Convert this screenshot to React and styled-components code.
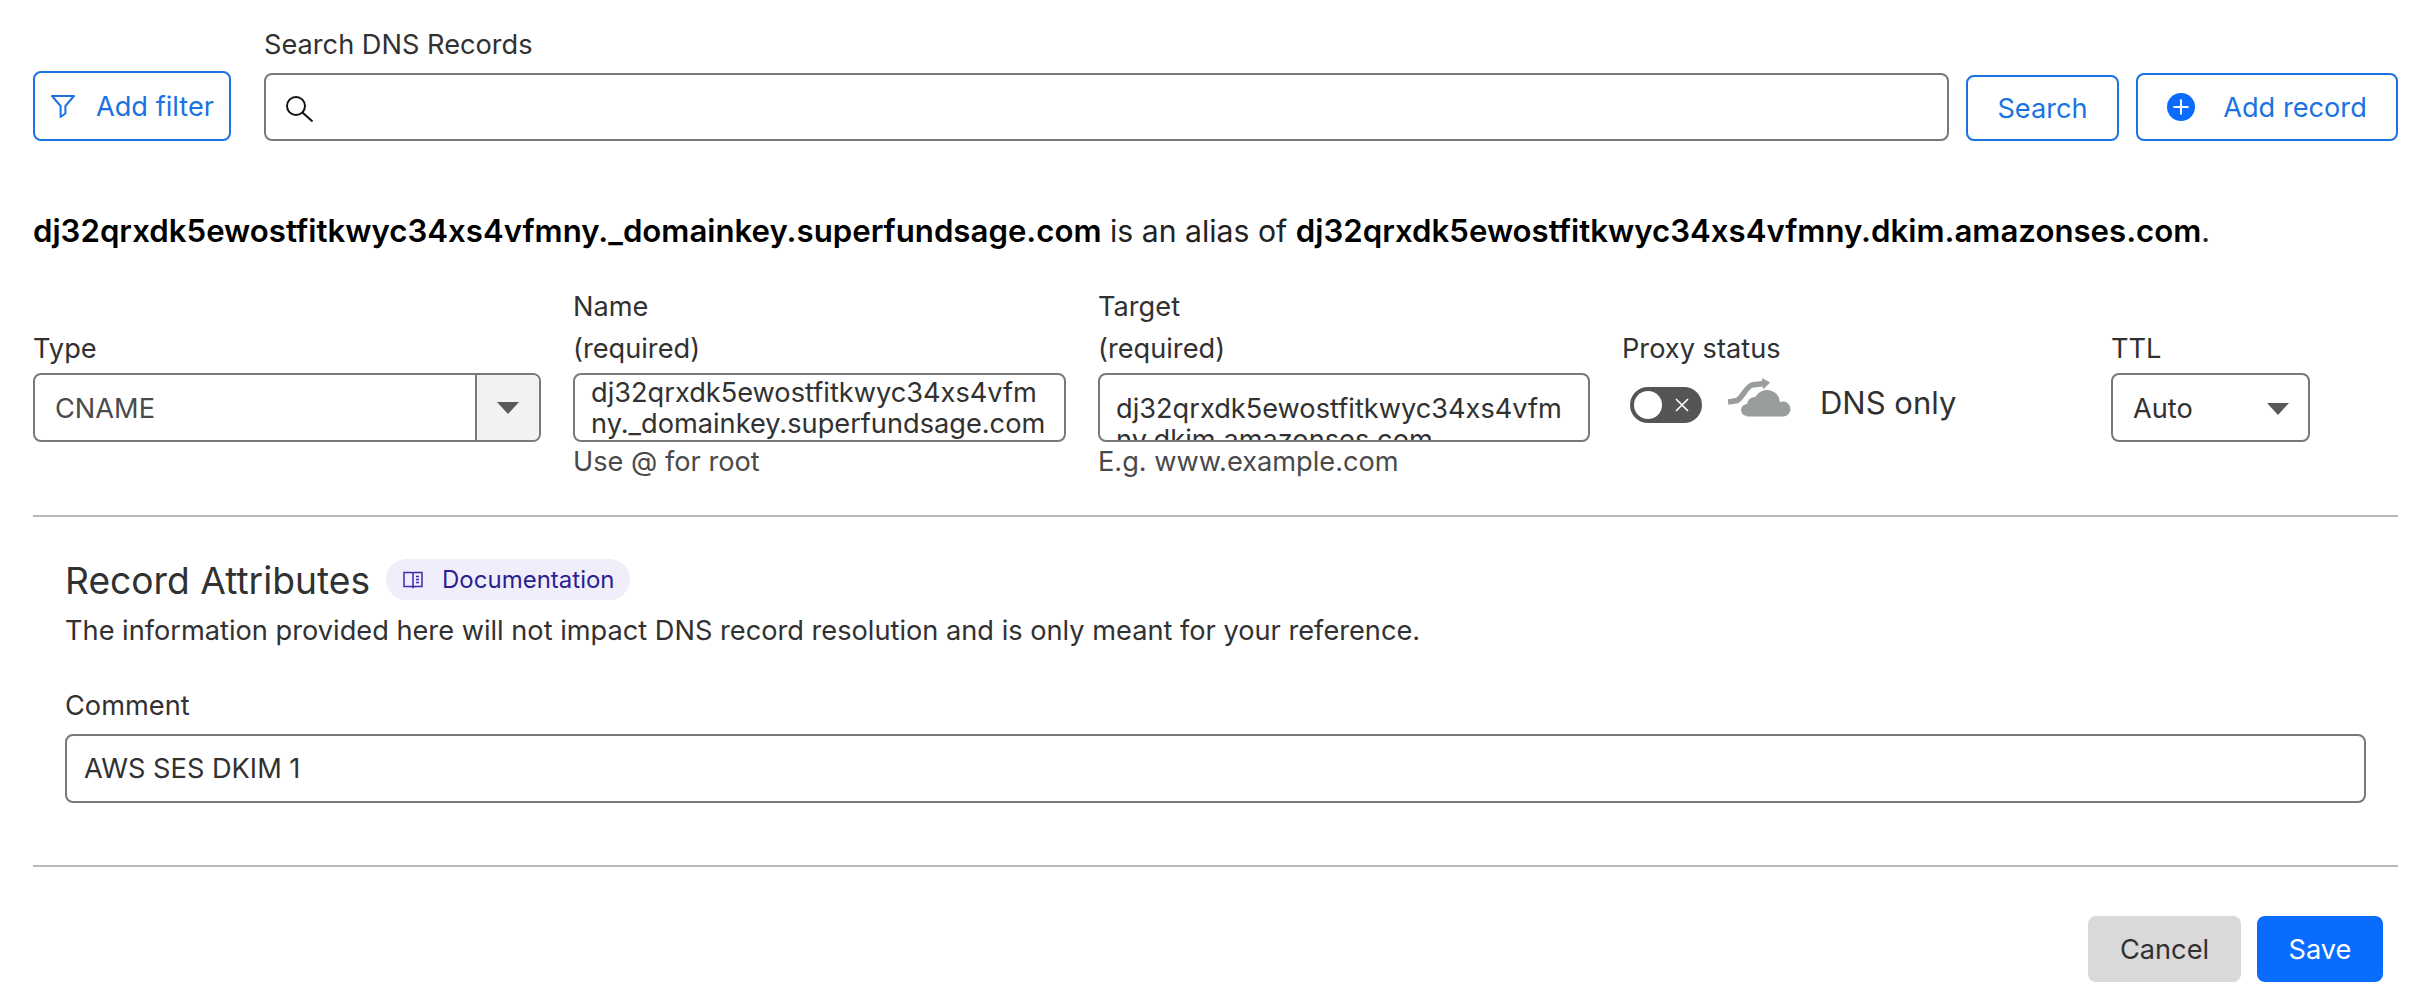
import React from "react";
import styled, { createGlobalStyle } from "styled-components";

const GlobalStyle = createGlobalStyle`
  html, body {
    margin: 0;
    background: #fff;
  }
  * {
    box-sizing: border-box;
  }
  body {
    font-family: Inter, "Noto Sans", sans-serif;
    color: #313131;
    font-size: 27.2px;
  }
`;

const BLUE = "#1a73e0";

const FilterIcon = () => (
  <svg width="26" height="26" viewBox="0 0 26 26" fill="none" stroke={BLUE} strokeWidth="2" strokeLinejoin="round">
    <path d="M2 3h22l-8.6 10v7.5L10.6 24V13z" />
  </svg>
);

const SearchIcon = () => (
  <svg width="28" height="28" viewBox="0 0 28 28" fill="none" stroke="#111" strokeWidth="2">
    <circle cx="10" cy="10" r="9" />
    <path d="M16.5 16.5l10 9" />
  </svg>
);

const PlusIcon = () => (
  <svg width="28" height="28" viewBox="0 0 28 28">
    <circle cx="14" cy="14" r="14" fill="#0a6cff" />
    <path d="M14 6.5v15M6.5 14h15" stroke="#fff" strokeWidth="2" />
  </svg>
);

const BookIcon = () => (
  <svg width="20" height="20" viewBox="0 0 20 20" fill="none" stroke="#3b2ba6" strokeWidth="1.5">
    <path d="M1 2.5h8l1 1 1-1h8v14h-8l-1 1-1-1H1zM10 3.5v13" />
    <path d="M13 6.5h3M13 9.5h3M13 12.5h3" />
  </svg>
);

const CrossIcon = () => (
  <svg width="14" height="14" viewBox="0 0 14 14" fill="none" stroke="#fff" strokeWidth="1.6">
    <path d="M1 1l12 12M13 1L1 13" />
  </svg>
);

const cloudParts = (
  <>
    <circle cx="19" cy="32" r="6" />
    <circle cx="27" cy="27" r="8" />
    <circle cx="39" cy="25" r="13" />
    <circle cx="55" cy="31" r="7.5" />
    <rect x="19" y="28" width="36" height="10.5" />
  </>
);

const CloudIcon = () => (
  <svg width="64" height="40" viewBox="0 0 64 40">
    <path d="M0 24l9-1.5C15 19 18 9 24 7l12-1.500" fill="none" stroke="#9a9d9e" strokeWidth="5.5" />
    <path d="M34 0l8 4.500-7 7z" fill="#9a9d9e" />
    <g fill="#fff" stroke="#fff" strokeWidth="3">
      {cloudParts}
    </g>
    <g fill="#9a9d9e">{cloudParts}</g>
  </svg>
);

const App = () => (
  <Page>
    <GlobalStyle />
    <Toolbar>
      <OutlineButton $width={198} $height={70} $gap={20}>
        <FilterIcon />
        <span>Add filter</span>
      </OutlineButton>
      <SearchField>
        <SearchLabel>Search DNS Records</SearchLabel>
        <SearchBox>
          <SearchIcon />
        </SearchBox>
      </SearchField>
      <OutlineButton $width={153} $height={66}>Search</OutlineButton>
      <OutlineButton $width={262} $height={68} $gap={28}>
        <PlusIcon />
        <span>Add record</span>
      </OutlineButton>
    </Toolbar>

    <AliasLine>
      <strong>dj32qrxdk5ewostfitkwyc34xs4vfmny._domainkey.superfundsage.com</strong> is an alias of{" "}
      <strong>dj32qrxdk5ewostfitkwyc34xs4vfmny.dkim.amazonses.com</strong>.
    </AliasLine>

    <FieldRow>
      <Field>
        <LabelBox>Type</LabelBox>
        <SelectBox>
          <SelectValue>CNAME</SelectValue>
          <SelectArrow>
            <Caret />
          </SelectArrow>
        </SelectBox>
      </Field>
      <Field>
        <LabelBox>
          <div>Name</div>
          <div>(required)</div>
        </LabelBox>
        <TextBox $top={2}>dj32qrxdk5ewostfitkwyc34xs4vfmny._domainkey.superfundsage.com</TextBox>
        <Hint>Use @ for root</Hint>
      </Field>
      <Field>
        <LabelBox>
          <div>Target</div>
          <div>(required)</div>
        </LabelBox>
        <TextBox $top={18}>dj32qrxdk5ewostfitkwyc34xs4vfmny.dkim.amazonses.com</TextBox>
        <Hint>E.g. www.example.com</Hint>
      </Field>
      <Field>
        <LabelBox>Proxy status</LabelBox>
        <ProxyRow>
          <Toggle>
            <Knob />
            <CrossIcon />
          </Toggle>
          <CloudSlot>
            <CloudIcon />
          </CloudSlot>
          <ProxyText>DNS only</ProxyText>
        </ProxyRow>
      </Field>
      <Field>
        <LabelBox>TTL</LabelBox>
        <TtlBox>
          <span>Auto</span>
          <Caret />
        </TtlBox>
      </Field>
    </FieldRow>

    <Divider />

    <Attributes>
      <AttributesHead>
        <Title>Record Attributes</Title>
        <DocBadge>
          <BookIcon />
          <span>Documentation</span>
        </DocBadge>
      </AttributesHead>
      <Description>
        The information provided here will not impact DNS record resolution and is only meant for your reference.
      </Description>
      <CommentLabel>Comment</CommentLabel>
      <CommentBox>AWS SES DKIM 1</CommentBox>
    </Attributes>

    <Divider />

    <Footer>
      <CancelButton>Cancel</CancelButton>
      <SaveButton>Save</SaveButton>
    </Footer>
  </Page>
);

const Page = styled.div`
  width: 2434px;
  height: 998px;
  padding: 0 36px 0 33px;
  overflow: hidden;
`;

const Toolbar = styled.div`
  display: flex;
  align-items: flex-end;
  height: 141px;
  gap: 17px;
`;

const OutlineButton = styled.button`
  display: flex;
  align-items: center;
  justify-content: center;
  gap: ${(p) => p.$gap || 18}px;
  width: ${(p) => p.$width}px;
  height: ${(p) => p.$height}px;
  flex: none;
  padding: 0;
  background: #fff;
  border: 2px solid ${BLUE};
  border-radius: 8px;
  color: ${BLUE};
  font: 400 27.2px Inter, sans-serif;
`;

const SearchField = styled.div`
  flex: 1;
  margin-left: 16px;
`;

const SearchLabel = styled.div`
  line-height: 34px;
  margin-bottom: 11px;
`;

const SearchBox = styled.div`
  display: flex;
  align-items: center;
  height: 68px;
  padding: 6px 0 0 20px;
  border: 2px solid #797979;
  border-radius: 8px;
`;

const AliasLine = styled.div`
  margin-top: 69px;
  font-size: 30.2px;
  line-height: 42px;
  color: #222;
  white-space: nowrap;

  strong {
    font-size: 31.2px;
    font-weight: 600;
    color: #000;
  }
`;

const FieldRow = styled.div`
  display: grid;
  grid-template-columns: 508px 493px 492px 457px 199px;
  column-gap: 32px;
  margin-top: 16px;
  height: 247px;
  align-items: start;
`;

const Field = styled.div`
  display: flex;
  flex-direction: column;
`;

const LabelBox = styled.div`
  display: flex;
  flex-direction: column;
  justify-content: flex-end;
  height: 105px;
  padding-bottom: 3px;
  line-height: 42px;
`;

const SelectBox = styled.div`
  display: flex;
  height: 69px;
  border: 2px solid #797979;
  border-radius: 8px;
  overflow: hidden;
`;

const SelectValue = styled.div`
  flex: 1;
  display: flex;
  align-items: center;
  padding: 2px 0 0 20px;
  color: #4a4a4a;
`;

const SelectArrow = styled.div`
  display: flex;
  align-items: center;
  justify-content: center;
  width: 64px;
  border-left: 2px solid #797979;
  background: #f2f2f2;
`;

const Caret = styled.span`
  display: block;
  width: 0;
  height: 0;
  border-left: 11px solid transparent;
  border-right: 11px solid transparent;
  border-top: 12px solid #595959;
`;

const TextBox = styled.div`
  height: 69px;
  padding: ${(p) => p.$top}px 16px 0 16px;
  border: 2px solid #797979;
  border-radius: 8px;
  overflow: hidden;
  line-height: 31px;
  word-break: break-all;
`;

const Hint = styled.div`
  margin-top: 2px;
  line-height: 36px;
  color: #4a4a4a;
`;

const ProxyRow = styled.div`
  display: flex;
  align-items: center;
  height: 60px;
  margin-top: 2px;
`;

const Toggle = styled.div`
  position: relative;
  display: flex;
  align-items: center;
  justify-content: flex-end;
  width: 72px;
  height: 36px;
  margin-left: 8px;
  padding-right: 13px;
  background: #555;
  border-radius: 18px;
`;

const Knob = styled.div`
  position: absolute;
  left: 4px;
  top: 4px;
  width: 28px;
  height: 28px;
  background: #fff;
  border-radius: 50%;
`;

const CloudSlot = styled.div`
  display: flex;
  margin: 0 0 14px 26px;
`;

const ProxyText = styled.span`
  margin: 0 0 6px 28px;
  font-size: 31px;
`;

const TtlBox = styled.div`
  display: flex;
  align-items: center;
  justify-content: space-between;
  height: 69px;
  padding: 2px 19px 0 20px;
  border: 2px solid #797979;
  border-radius: 8px;
`;

const Divider = styled.hr`
  margin: 0;
  border: none;
  border-top: 2px solid #b8b8b8;
`;

const Attributes = styled.div`
  height: 348px;
  padding: 0 32px;
`;

const AttributesHead = styled.div`
  display: flex;
  align-items: center;
  gap: 16px;
  height: 97px;
  padding-top: 31px;
`;

const Title = styled.div`
  font-size: 37.2px;
  line-height: 50px;
`;

const DocBadge = styled.div`
  display: flex;
  align-items: center;
  gap: 19px;
  height: 41px;
  margin-bottom: 3px;
  padding: 0 15px 0 17px;
  background: #f0eefb;
  border-radius: 21px;
  color: #2c1f8f;
  font-size: 24px;
`;

const Description = styled.div`
  margin-top: -3px;
  line-height: 40px;
`;

const CommentLabel = styled.div`
  margin-top: 35px;
  line-height: 40px;
`;

const CommentBox = styled.div`
  display: flex;
  align-items: center;
  height: 69px;
  margin-top: 8px;
  padding-left: 17px;
  border: 2px solid #797979;
  border-radius: 8px;
`;

const Footer = styled.div`
  display: flex;
  justify-content: flex-end;
  gap: 16px;
  padding: 49px 15px 0 0;
`;

const CancelButton = styled.button`
  width: 153px;
  height: 66px;
  padding: 0;
  border: none;
  border-radius: 8px;
  background: #d9d9d9;
  color: #313131;
  font: 400 27.2px Inter, sans-serif;
`;

const SaveButton = styled(CancelButton)`
  width: 126px;
  background: #0a6cff;
  color: #fff;
`;

export default App;
